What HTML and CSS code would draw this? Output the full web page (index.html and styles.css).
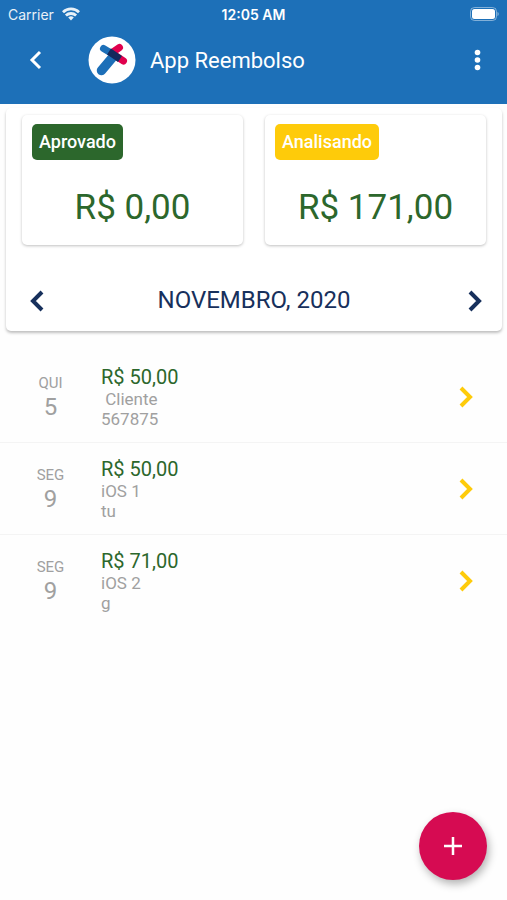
FILE: index.html
```html
<!DOCTYPE html>
<html lang="pt-BR">
<head>
    <meta charset="UTF-8">
    <meta name="viewport" content="width=device-width, initial-scale=1.0">
    <title>App Reembolso</title>
    <link rel="stylesheet" href="styles.css">
</head>
<body>
    <header class="header">
        <div class="status-bar">
            <div class="carrier">
                <span>Carrier</span>
                <svg width="18" height="14" viewBox="0 0 18 14" fill="none" stroke="#fff" stroke-width="2.8">
                    <path d="M1 5.2a11.4 11.4 0 0 1 16 0"/>
                    <path d="M3.9 8.6a7.3 7.3 0 0 1 10.2 0"/>
                    <path d="M9 13.6l-2.8-3a4 4 0 0 1 5.6 0z" fill="#fff" stroke="none"/>
                </svg>
            </div>
            <span class="time">12:05 AM</span>
            <div class="battery">
                <svg width="30" height="14" viewBox="0 0 30 14">
                    <rect x="1.5" y="0.5" width="26" height="13" rx="4" fill="none" stroke="#fff" stroke-opacity=".45"/>
                    <rect x="3" y="2" width="23" height="10" rx="2.5" fill="#fff"/>
                    <path d="M28.500 5v4c1.600-.7 1.600-3.300 0-4z" fill="#fff" fill-opacity=".5"/>
                </svg>
            </div>
        </div>
        <div class="toolbar">
            <button class="icon-button" type="button" aria-label="Voltar">
                <svg width="24" height="24" viewBox="0 0 24 24" fill="none" stroke="#fff" stroke-width="3">
                    <path d="M16 4L8 12l8 8"/>
                </svg>
            </button>
            <svg class="logo" width="48" height="48" viewBox="0 0 48 48" fill="none" stroke-linecap="round">
                <circle cx="24" cy="24" r="23.5" fill="#fff"/>
                <path d="M31.5 11.5L25 16" stroke="#e0004d" stroke-width="7"/>
                <path d="M28 20L35.5 25" stroke="#e0004d" stroke-width="7"/>
                <path d="M15.5 12.5L23 17" stroke="#1c6fb8" stroke-width="7"/>
                <path d="M24 22L13.5 34.5" stroke="#1c6fb8" stroke-width="9.5"/>
                <path d="M21 15.500L32 23" stroke="#14295c" stroke-width="7" stroke-linecap="butt"/>
            </svg>
            <h1>App Reembolso</h1>
            <button class="icon-button" type="button" aria-label="Menu">
                <svg width="24" height="24" viewBox="0 0 24 24" fill="#fff">
                    <circle cx="12.5" cy="4.5" r="2.8"/>
                    <circle cx="12.5" cy="12" r="2.8"/>
                    <circle cx="12.5" cy="19.5" r="2.8"/>
                </svg>
            </button>
        </div>
    </header>

    <main>
        <section class="summary">
            <div class="totals">
                <div class="total">
                    <span class="badge approved">Aprovado</span>
                    <p>R$ 0,00</p>
                </div>
                <div class="total">
                    <span class="badge pending">Analisando</span>
                    <p>R$ 171,00</p>
                </div>
            </div>
            <div class="month">
                <button class="icon-button" type="button" aria-label="Mês anterior">
                    <svg width="24" height="24" viewBox="0 0 24 24" fill="none" stroke="#17305c" stroke-width="4">
                        <path d="M20 4l-9 9 9 9"/>
                    </svg>
                </button>
                <h2>NOVEMBRO, 2020</h2>
                <button class="icon-button" type="button" aria-label="Próximo mês">
                    <svg width="24" height="24" viewBox="0 0 24 24" fill="none" stroke="#17305c" stroke-width="4">
                        <path d="M8 4l9 9-9 9"/>
                    </svg>
                </button>
            </div>
        </section>

        <ul class="expenses">
            <li>
                <a href="#" class="expense">
                    <span class="date"><small>QUI</small><b>5</b></span>
                    <span class="info"><strong>R$ 50,00</strong><span>&nbsp;Cliente</span><span>567875</span></span>
                    <svg width="24" height="24" viewBox="0 0 24 24" fill="none" stroke="#fecb0a" stroke-width="4">
                        <path d="M7 3l9 9-9 9"/>
                    </svg>
                </a>
            </li>
            <li>
                <a href="#" class="expense">
                    <span class="date"><small>SEG</small><b>9</b></span>
                    <span class="info"><strong>R$ 50,00</strong><span>iOS 1</span><span>tu</span></span>
                    <svg width="24" height="24" viewBox="0 0 24 24" fill="none" stroke="#fecb0a" stroke-width="4">
                        <path d="M7 3l9 9-9 9"/>
                    </svg>
                </a>
            </li>
            <li>
                <a href="#" class="expense">
                    <span class="date"><small>SEG</small><b>9</b></span>
                    <span class="info"><strong>R$ 71,00</strong><span>iOS 2</span><span>g</span></span>
                    <svg width="24" height="24" viewBox="0 0 24 24" fill="none" stroke="#fecb0a" stroke-width="4">
                        <path d="M7 3l9 9-9 9"/>
                    </svg>
                </a>
            </li>
        </ul>
    </main>

    <button class="add" type="button" aria-label="Adicionar">
        <svg width="18" height="18" viewBox="0 0 18 18" fill="none" stroke="#fff" stroke-width="2.5">
            <path d="M9 0v18M0 9h18"/>
        </svg>
    </button>
</body>
</html>
```
FILE: styles.css
```css
* {
    box-sizing: border-box;
}

body {
    margin: 0;
    font-family: Roboto, "Liberation Sans", sans-serif;
    background-color: #fefefe;
}

h1, h2, p, ul {
    margin: 0;
    padding: 0;
    font-weight: 400;
}

svg {
    display: block;
    flex-shrink: 0;
}

button {
    border: none;
    cursor: pointer;
}

.header {
    background-color: #1d70b8;
    color: white;
}

.status-bar {
    display: grid;
    grid-template-columns: 1fr auto 1fr;
    align-items: center;
    height: 28px;
    padding: 0 8px;
    font-family: Inter, sans-serif;
    font-size: 14px;
}

.carrier {
    display: flex;
    align-items: center;
    gap: 8px;
    opacity: 0.9;
}

.time {
    font-weight: 600;
}

.battery {
    justify-self: end;
}

.toolbar {
    display: flex;
    align-items: center;
    height: 76px;
    padding: 0 18px 12px 24px;
}

.icon-button {
    padding: 0;
    background: none;
}

.logo {
    margin: 0 14px 0 40px;
}

.toolbar h1 {
    flex: 1;
    font-size: 22px;
}

.summary {
    margin: 4px 5px 0 6px;
    padding: 7px 16px 16px;
    background-color: white;
    border-radius: 5px;
    box-shadow: 0 2px 3px rgba(0, 0, 0, 0.25);
}

.totals {
    display: grid;
    grid-template-columns: 1fr 1fr;
    gap: 22px;
}

.total {
    height: 130px;
    padding: 9px 10px;
    border-radius: 5px;
    box-shadow: 0 1px 3px rgba(0, 0, 0, 0.25);
}

.badge {
    display: inline-block;
    padding: 0 7px;
    border-radius: 5px;
    color: white;
    font-size: 18px;
    font-weight: 500;
    line-height: 36px;
}

.approved {
    background-color: #2c672c;
}

.pending {
    background-color: #fecb0a;
}

.total p {
    margin-top: 26px;
    color: #2c672c;
    font-size: 35px;
    line-height: 44px;
    text-align: center;
}

.month {
    display: flex;
    align-items: center;
    justify-content: space-between;
    margin-top: 40px;
    color: #17305c;
}

.month h2 {
    font-size: 24px;
    line-height: 30px;
}

.expenses {
    margin-top: 20px;
    list-style: none;
}

.expenses li + li {
    border-top: 1px solid #f4f4f4;
}

.expense {
    display: flex;
    align-items: center;
    height: 91px;
    padding: 0 29px 0 0;
    color: #a0a0a0;
    text-decoration: none;
}

.date {
    display: flex;
    flex-direction: column;
    width: 101px;
    text-align: center;
}

.date small {
    font-size: 15px;
    line-height: 20px;
}

.date b {
    font-size: 24px;
    font-weight: 400;
    line-height: 28px;
}

.info {
    display: flex;
    flex: 1;
    flex-direction: column;
    font-size: 17px;
    line-height: 20px;
}

.info strong {
    color: #2c672c;
    font-size: 20px;
    font-weight: 400;
    line-height: 24px;
}

.add {
    display: flex;
    align-items: center;
    justify-content: center;
    position: fixed;
    right: 20px;
    bottom: 20px;
    width: 68px;
    height: 68px;
    padding: 0;
    border-radius: 50%;
    background-color: #d60b52;
    box-shadow: 2px 4px 8px rgba(0, 0, 0, 0.3);
}
```
